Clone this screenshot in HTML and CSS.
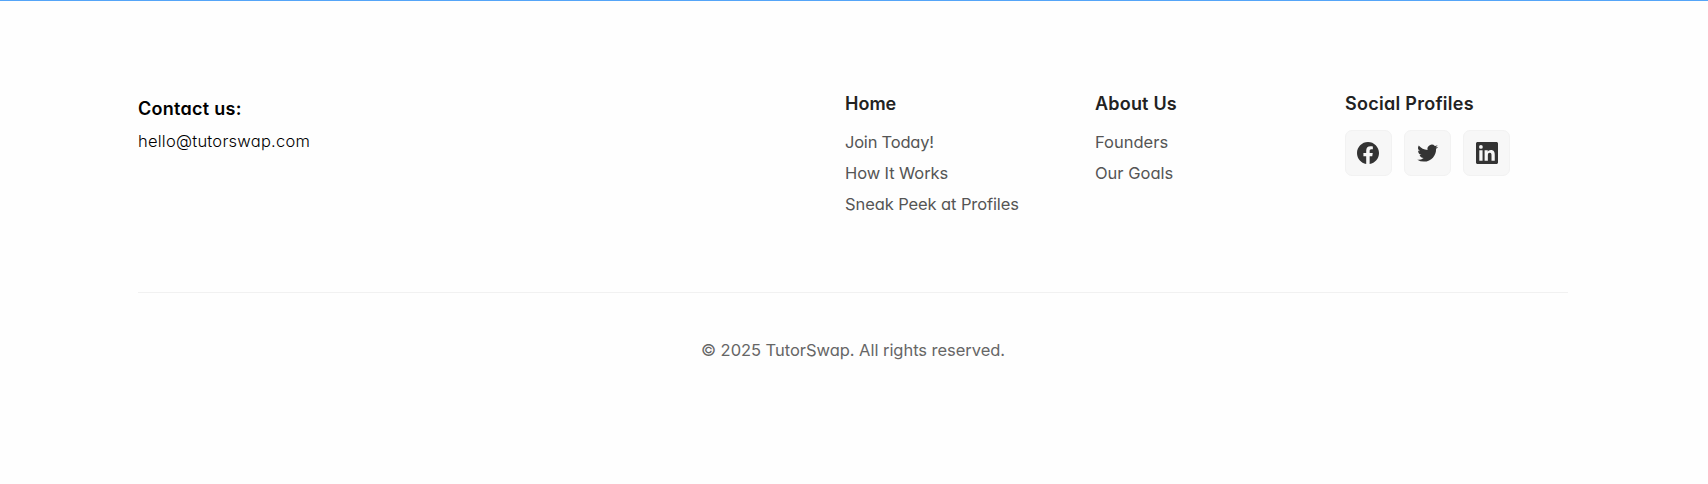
FILE: index.html
```html
<!DOCTYPE html>
<html lang="en">
<head>
<meta charset="utf-8">
<title>TutorSwap</title>
<link rel="stylesheet" href="styles.css">
</head>
<body>
<footer class="footer">
  <div class="container">
    <div class="top">
      <div class="contact">
        <h3>Contact us:</h3>
        <p>hello@tutorswap.com</p>
      </div>
      <nav class="column">
        <h4>Home</h4>
        <a class="t-join">Join Today!</a>
        <a class="t-how">How It Works</a>
        <a class="t-how">Sneak Peek at Profiles</a>
      </nav>
      <nav class="column">
        <h4 class="t-about">About Us</h4>
        <a>Founders</a>
        <a>Our Goals</a>
      </nav>
      <div class="column">
        <h4 class="t-social">Social Profiles</h4>
        <div class="socials">
          <a class="tile tile-facebook" aria-label="Facebook"><svg viewBox="0 0 24 24"><path d="M12 1C5.92 1 1 5.95 1 12.07c0 5.5 4 10.08 9.2 10.93v-7.8H7.4v-3.13h2.8V9.7c0-2.8 1.65-4.33 4.2-4.33 1.2 0 2.45.22 2.45.22v2.7h-1.4c-1.36 0-1.8.86-1.8 1.74v2.04h3.1l-.5 3.13h-2.6V23C19 22.15 23 17.57 23 12.07 23 5.95 18.08 1 12 1z"/></svg></a>
          <a class="tile" aria-label="Twitter"><svg viewBox="0 0 24 24"><path d="M22.16 5.66c-.77.34-1.6.57-2.46.67.89-.53 1.56-1.37 1.88-2.37-.83.49-1.75.85-2.72 1.04a4.28 4.28 0 0 0-7.3 3.9A12.16 12.16 0 0 1 2.74 4.43a4.28 4.28 0 0 0 1.32 5.71 4.26 4.26 0 0 1-1.94-.53v.05a4.28 4.28 0 0 0 3.43 4.2 4.3 4.3 0 0 1-1.93.07 4.29 4.29 0 0 0 4 2.98A8.59 8.59 0 0 1 1.3 18.68a12.12 12.12 0 0 0 6.56 1.92c7.88 0 12.2-6.53 12.2-12.19l-.02-.55a8.7 8.7 0 0 0 2.12-2.2z"/></svg></a>
          <a class="tile" aria-label="LinkedIn"><svg viewBox="0 0 24 24"><path fill-rule="evenodd" d="M2.6 1h18.8c.9 0 1.6.7 1.6 1.58v18.84c0 .88-.7 1.58-1.6 1.58H2.6C1.7 23 1 22.3 1 21.42V2.58C1 1.7 1.7 1 2.6 1zm1.7 8.25v10.5h3.25V9.25zm1.62-5.2a1.88 1.88 0 1 0 0 3.76 1.88 1.88 0 0 0 0-3.76zM9.6 9.25v10.5h3.25v-5.2c0-1.37.26-2.7 1.96-2.7 1.67 0 1.7 1.57 1.7 2.8v5.1h3.24V14c0-2.83-.6-5-3.9-5-1.59 0-2.65.87-3.09 1.7h-.04V9.25z"/></svg></a>
        </div>
      </div>
    </div>
    <p class="copyright">© 2025 TutorSwap. All rights reserved.</p>
  </div>
</footer>
</body>
</html>
```
FILE: styles.css
```css
* { box-sizing: border-box; margin: 0; padding: 0; }
body {
  font-family: Inter, "Noto Sans", sans-serif;
  font-feature-settings: "cv11";
  background: #fefefe;
  color: #000;
}
.footer { height: 484px; border-top: 1px solid #55a5f8; }
.container { width: 1430px; margin: 0 auto 0 138px; padding-top: 89px; }
.top {
  display: grid;
  grid-template-columns: 707px 250px 250px 1fr;
  height: 203px;
  border-bottom: 1px solid #f1f1f1;
}
.contact { padding-top: 5px; }
.contact h3 { font-size: 18px; line-height: 28px; font-weight: 600; letter-spacing: 0.27px; }
.contact p { font-size: 16.5px; line-height: 26px; margin-top: 5px; font-weight: 300; letter-spacing: 0.24px; }
.column { display: flex; flex-direction: column; }
.column h4 { font-size: 18px; line-height: 28px; font-weight: 600; color: #222; margin-bottom: 9px; }
.column > a { font-size: 16.5px; line-height: 31px; color: #555; }
.column > .t-join { letter-spacing: -0.22px; }
.column > .t-how { letter-spacing: -0.1px; }
.column .t-about { letter-spacing: 0.2px; }
.column .t-social { letter-spacing: 0.28px; }
.socials { display: flex; gap: 12px; margin-top: 3px; }
.tile {
  width: 47px; height: 46px;
  display: grid; place-items: center;
  background: #f7f7f7; border: 1px solid #f2f2f2; border-radius: 7px;
}
.tile svg { width: 24px; height: 24px; fill: #333; }
.tile-facebook { padding-right: 1px; }
.copyright { padding-top: 43px; line-height: 28px; font-size: 16.5px; color: #666; text-align: center; letter-spacing: -0.04px; }
```
